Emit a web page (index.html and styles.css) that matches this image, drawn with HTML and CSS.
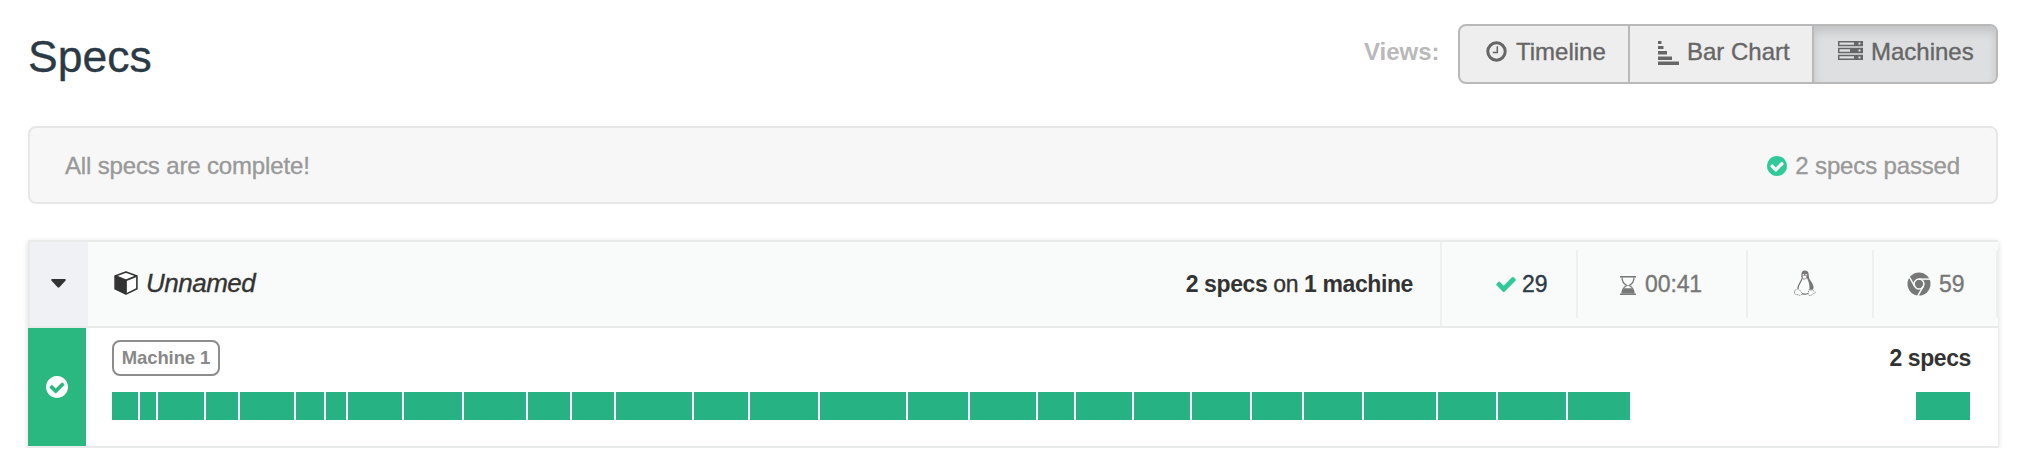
FILE: index.html
```html
<!DOCTYPE html>
<html lang="en">
<head>
<meta charset="utf-8">
<title>Specs</title>
<link rel="stylesheet" href="styles.css">
</head>
<body>
<header class="page-head">
  <h1 class="title">Specs</h1>
  <div class="views">
    <span class="views-label">Views:</span>
    <nav class="tabs">
      <a class="tab tab-timeline">
        <svg class="icon-clock" viewBox="0 0 21 21"><circle cx="10.5" cy="10.5" r="8.7" fill="none" stroke="currentColor" stroke-width="3"/><path d="M11.3 5.2v6.4H6.8" fill="none" stroke="currentColor" stroke-width="1.5"/></svg>
        <span>Timeline</span>
      </a>
      <a class="tab tab-chart">
        <svg class="icon-bars" viewBox="0 0 22 24" fill="currentColor"><path d="M0 0h3.5v3H0zM0 5h5.5v3H0zM0 10h9v3.5H0zM0 15.5h14v3.5H0zM0 20.5h21v3.5H0z"/></svg>
        <span>Bar Chart</span>
      </a>
      <a class="tab tab-machines active">
        <svg class="icon-server" viewBox="0 0 25 19"><g fill="none" stroke="currentColor" stroke-width="1.5"><path d="M.7.7h23.6v3.8H.7zM.7 7.6h23.6v3.8H.7zM.7 14.5h23.6v3.8H.7z"/></g><path d="M16 .7h8v3.8h-8zM12 7.6h12v3.8H12zM16 14.5h8v3.8h-8z" fill="currentColor"/><path d="M20.5 1.6h2v2h-2zM20.5 8.5h2v2h-2zM20.5 15.4h2v2h-2z" fill="#dddfe1"/></svg>
        <span>Machines</span>
      </a>
    </nav>
  </div>
</header>

<section class="banner">
  <span>All specs are complete!</span>
  <span class="passed">
    <svg class="icon-passed" viewBox="128 128 1536 1536" fill="currentColor"><path d="M1412 734q0-28-18-46l-91-90q-19-19-45-19t-45 19l-408 407-226-226q-19-19-45-19t-45 19l-91 90q-18 18-18 46 0 27 18 45l362 362q19 19 45 19 27 0 46-19l543-543q18-18 18-45zm252 162q0 209-103 385.5t-279.5 279.5-385.5 103-385.5-103-279.5-279.5-103-385.5 103-385.5 279.5-279.5 385.5-103 385.5 103 279.5 279.5 103 385.5z"/></svg>
    <span>2 specs passed</span>
  </span>
</section>

<section class="card">
  <div class="group">
    <div class="toggle"><svg class="icon-caret" viewBox="0 0 15 9"><path d="M1.3 0h12.4q1.8.3.7 1.8L8.4 8.3q-.9.8-1.8 0L.6 1.8Q-.5.3 1.3 0z" fill="#333"/></svg></div>
    <div class="group-name">
      <svg class="icon-cube" viewBox="0 0 24 24"><path d="M12 .9 22.9 4.9V17.7L12 23.1 1.1 17.7V4.9z" fill="#fff" stroke="#333" stroke-width="1.6" stroke-linejoin="round"/><path d="M1.1 5 12 9.6V23.2L1.1 17.8z" fill="#333"/><path d="M1.1 4.9 12 9.4 22.9 4.9M12 9.4v13" fill="none" stroke="#333" stroke-width="1.7"/></svg>
      <em>Unnamed</em>
    </div>
    <div class="summary"><b>2 specs</b> on <b>1 machine</b></div>
    <div class="stat stat-tests">
      <svg class="icon-check" viewBox="121 334 1550 1188" fill="currentColor"><path d="M1671 566q0 40-28 68l-724 724-136 136q-28 28-68 28t-68-28l-136-136-362-362q-28-28-28-68t28-68l136-136q28-28 68-28t68 28l294 295 656-657q28-28 68-28t68 28l136 136q28 28 28 68z"/></svg>
      <span>29</span>
    </div>
    <div class="stat stat-time">
      <svg class="icon-hourglass" viewBox="0 0 16 19"><path d="M0 .8h16M0 18.2h16" stroke="currentColor" stroke-width="1.6"/><path d="M2 1.5C2 5.500 4 8 6.800 9.500 4 11 2 13.500 2 17.500M14 1.500C14 5.500 12 8 9.200 9.500 12 11 14 13.500 14 17.500" fill="none" stroke="currentColor" stroke-width="1.300"/><path d="M2 17.500Q2.200 14.500 4 12.300h8q1.800 2.200 2 5.200z" fill="currentColor"/></svg>
      <span>00:41</span>
    </div>
    <div class="stat stat-os">
      <svg class="icon-linux" viewBox="0 0 22 26"><path d="M7.3 7C7.2 3 7.8.4 10.9.4c3.3 0 4 2.8 4 6 0 3.2 4 6.2 4.600 10.200.3 1.700-.2 2.800-1.200 3.400l-3.700-.8c.8-4.800-1.200-8.200-2.600-10.400L9 10.200z" fill="currentColor"/><path d="M8 8.500C7.300 12 4 14.500 4 19l4 4.500c2 .8 4.500.7 6-.4l1.400-3.600C16 15 14.500 11 13 8l-2.300 1.700z" fill="#fafbfb"/><path d="M8 8.500C7.300 12 4.200 14 3.900 18.600M8 23.600q3 1 6-.1" fill="none" stroke="currentColor" stroke-width="1.300"/><path d="M8.300 6q2-1.200 4.500.2l-.5 2.200q-1.800 1.100-3.600.1z" fill="#fafbfb" stroke="currentColor" stroke-width=".6"/><path d="M8.600 4.800h1.300M11.400 4.800h1.500" stroke="#fafbfb" stroke-width="1.500"/><path d="M3.700 18.700c1.300-.2 2.800 2.700 4 4 .8 1.200-.2 2.800-2 2.600-1.800-.3-3.300-1.100-5-1.300-.7-.6.200-1.800-.2-3.200.3-1 1.400-.5 2-.9.500-.5.500-1.100 1.200-1.200zM15 19.400c1 .9 2.400 1 3.500.1l1 1.500 2 1.400c-.9 1.200-2.600 1.300-3.700 2.500-1 1-3 .8-3.500-.5-.3-1.500.4-3 .7-5z" fill="#fafbfb" stroke="currentColor" stroke-width=".8" stroke-dasharray="1.600 .7"/></svg>
    </div>
    <div class="stat stat-browser">
      <svg class="icon-chrome" viewBox="-12 -12 24 24"><circle r="11.500" fill="currentColor"/><g fill="none" stroke="#fafbfb" stroke-width="1.500"><circle r="4.900"/><path d="M0-4.900H11.500"/><path d="M0-4.900H11.500" transform="rotate(120)"/><path d="M0-4.900H11.500" transform="rotate(240)"/></g></svg>
      <span>59</span>
    </div>
  </div>
  <div class="machine">
    <div class="status"><svg class="icon-status" viewBox="128 128 1536 1536" fill="currentColor"><path d="M1412 734q0-28-18-46l-91-90q-19-19-45-19t-45 19l-408 407-226-226q-19-19-45-19t-45 19l-91 90q-18 18-18 46 0 27 18 45l362 362q19 19 45 19 27 0 46-19l543-543q18-18 18-45zm252 162q0 209-103 385.5t-279.5 279.5-385.5 103-385.5-103-279.5-279.5-103-385.500 103-385.500 279.500-279.500 385.500-103 385.500 103 279.500 279.500 103 385.500z"/></svg></div>
    <div class="machine-body">
      <div class="machine-head">
        <span class="machine-name">Machine 1</span>
        <b class="machine-count">2 specs</b>
      </div>
      <div class="bars">
        <i style="width:26px"></i><i style="width:16px"></i><i style="width:46px"></i><i style="width:32px"></i><i style="width:54px"></i><i style="width:28px"></i><i style="width:20px"></i><i style="width:54px"></i><i style="width:58px"></i><i style="width:62px"></i><i style="width:42px"></i><i style="width:42px"></i><i style="width:76px"></i><i style="width:54px"></i><i style="width:68px"></i><i style="width:86px"></i><i style="width:60px"></i><i style="width:66px"></i><i style="width:36px"></i><i style="width:56px"></i><i style="width:56px"></i><i style="width:58px"></i><i style="width:50px"></i><i style="width:58px"></i><i style="width:72px"></i><i style="width:58px"></i><i style="width:68px"></i><i style="width:62px"></i><i class="last" style="width:54px"></i>
      </div>
    </div>
  </div>
</section>
</body>
</html>
```
FILE: styles.css
```css
* { box-sizing: border-box; }
body {
  margin: 0;
  padding: 24px 28px 0;
  background: #fff;
  color: #333;
  font-family: "Liberation Sans", Arial, sans-serif;
  font-size: 24px;
  -webkit-text-stroke: .35px currentColor;
}
b, .views-label, .machine-name { -webkit-text-stroke: 0; }
svg { display: block; flex: none; }

.page-head { display: flex; justify-content: space-between; height: 60px; }
.title { margin: 0; font-size: 44.5px; font-weight: 400; line-height: 66px; color: #2c3a45; }
.views { display: flex; }
.views-label { width: 94px; line-height: 56px; font-weight: 700; color: #b9b9b9; }
.tabs {
  display: flex;
  width: 540px;
  border: 2px solid #b9b9b9;
  border-radius: 8px;
  background: #eee;
  color: #666;
  overflow: hidden;
}
.tab { display: flex; line-height: 52px; white-space: nowrap; }
.tab + .tab { border-left: 2px solid #b9b9b9; }
.tab-timeline { width: 168px; padding-left: 26px; }
.tab-chart { width: 184px; padding-left: 28px; }
.tab-machines { flex: 1; padding-left: 24px; }
.tab.active { background: #dddfe1; box-shadow: inset 0 6px 10px rgba(0, 0, 0, .125); }
.icon-clock { width: 21px; height: 21px; margin: 15px 9px 0 0; }
.icon-bars { width: 22px; height: 24px; margin: 15px 7px 0 0; }
.icon-server { width: 25px; height: 19px; margin: 15px 8px 0 0; }

.banner {
  display: flex;
  justify-content: space-between;
  height: 78px;
  margin-top: 42px;
  padding: 1px 36px 0 35px;
  border: 2px solid #e7e7e7;
  border-radius: 8px;
  background: #f7f7f7;
  color: #999;
  line-height: 74px;
  letter-spacing: -.15px;
}
.passed { display: flex; align-items: center; gap: 8px; }
.icon-passed { width: 20px; height: 20px; color: #32c99a; }

.card { margin-top: 36px; height: 208px; border-bottom: 2px solid #e9ebeb; box-shadow: 0 2px 6px rgba(0, 0, 0, .15); }
.group {
  display: flex;
  height: 88px;
  border: 2px solid #e9ebeb;
  border-right: 0;
  background: #f9fbfa;
}
.toggle { display: flex; justify-content: center; align-items: center; width: 58px; padding-right: 1px; background: #f0f1f4; }
.icon-caret { width: 15px; height: 9px; margin-bottom: 2px; }
.group-name { display: flex; align-items: center; gap: 8px; flex: 1; padding: 0 0 2px 26px; font-size: 26px; letter-spacing: -.5px; }
.icon-cube { width: 24px; height: 24px; }
.summary { padding-right: 27px; border-right: 2px solid #eef0f0; line-height: 84px; font-size: 23px; letter-spacing: -.4px; }
.stat { display: flex; align-items: center; height: 68px; margin-top: 8px; border-right: 2px solid #eef0f0; font-size: 23px; letter-spacing: -.1px; color: #777; }
.stat-tests { width: 136px; padding-left: 54px; gap: 6px; color: #2c3a45; }
.stat-time { width: 170px; padding-left: 42px; gap: 9px; }
.stat-os { width: 126px; padding-left: 46px; }
.stat-browser { width: 124px; padding-left: 33px; gap: 8px; }
.icon-check { width: 20px; height: 15px; color: #32c99a; }
.icon-hourglass { width: 16px; height: 19px; margin-top: 2px; }
.icon-linux { width: 22px; height: 26px; margin-bottom: 2px; }
.icon-chrome { width: 24px; height: 24px; }

.machine { display: flex; height: 118px; background: #fff; }
.status { display: flex; justify-content: center; align-items: center; width: 58px; background: #2bb780; color: #fff; }
.icon-status { width: 22px; height: 22px; }
.machine-body { flex: 1; padding: 12px 27px 0 26px; }
.machine-head { display: flex; justify-content: space-between; }
.machine-name {
  width: 108px;
  height: 36px;
  border: 2px solid #8c8c8c;
  border-radius: 8px;
  text-align: center;
  line-height: 31px;
  font-size: 18.5px;
  font-weight: 700;
  letter-spacing: -.1px;
  color: #888;
}
.machine-count { line-height: 36px; font-size: 23px; letter-spacing: -.4px; }
.bars { display: flex; gap: 2px; margin: 16px 1px 0 0; }
.bars i { height: 28px; background: #26b282; }
.bars .last { margin-left: auto; }
```
